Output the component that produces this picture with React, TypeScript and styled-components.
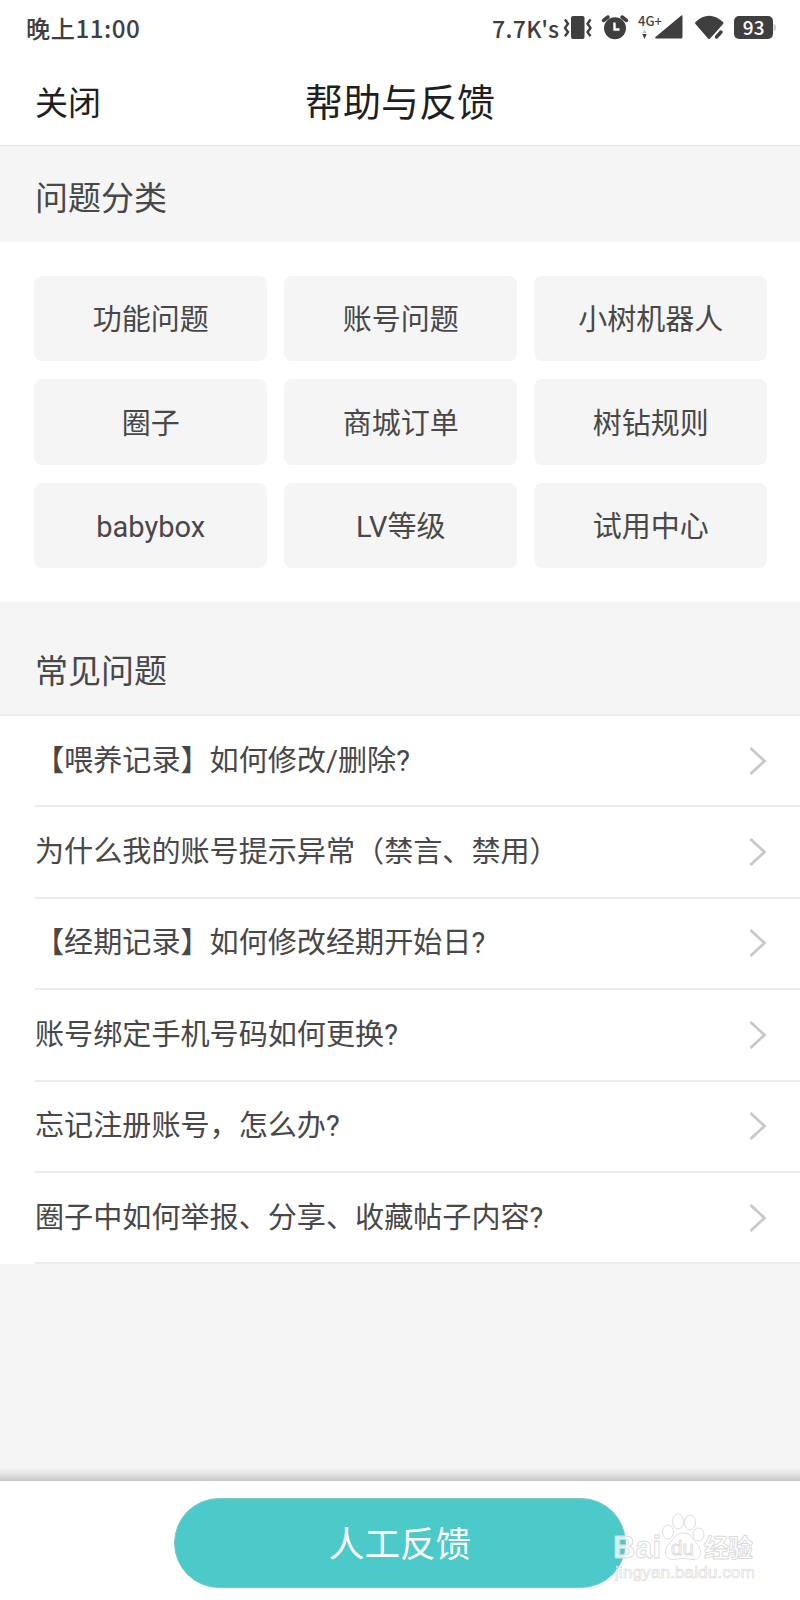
import React from 'react';
import styled, { createGlobalStyle } from 'styled-components';

const Global = createGlobalStyle`
  * { box-sizing: border-box; }
  body {
    margin: 0;
    background: #f5f5f5;
    font-family: Roboto, "Noto Sans CJK SC", sans-serif;
    color: #484848;
  }
`;

const Page = styled.div`
  position: relative;
  display: flex;
  flex-direction: column;
  width: 800px;
  height: 1600px;
  overflow: hidden;
  background: #f5f5f5;
`;

const StatusBar = styled.div`
  display: flex;
  justify-content: space-between;
  align-items: center;
  height: 56px;
  padding: 0 26px 0 26px;
  background: #fff;
  color: #3f3f3f;
`;

const Clock = styled.span`
  font: 500 24.2px/56px "Noto Sans CJK SC", sans-serif;
  letter-spacing: 0.5px;
  white-space: nowrap;
`;

const StatusRight = styled.div`
  display: flex;
  align-items: center;
`;

const Speed = styled.span`
  width: 70px;
  font: 500 23px/56px "Noto Sans CJK SC", sans-serif;
  letter-spacing: 0.4px;
  white-space: nowrap;
`;

const StatusIcons = styled.svg`
  display: block;
  width: 212px;
  height: 56px;
`;

const NavBar = styled.header`
  display: grid;
  grid-template-columns: 1fr auto 1fr;
  align-items: center;
  height: 90px;
  padding: 0 35px 0 35px;
  border-bottom: 1px solid #e4e4e4;
  background: #fff;
  color: #1f1f1f;
`;

const CloseButton = styled.button`
  justify-self: start;
  padding: 0;
  border: 0;
  background: none;
  color: inherit;
  font: 400 33px/48px "Noto Sans CJK SC", sans-serif;
`;

const Title = styled.h1`
  margin: 0;
  padding-bottom: 2px;
  font: 400 38px/56px "Noto Sans CJK SC", sans-serif;
`;

const SectionTitle = styled.h2<{ $height: number; $top: number }>`
  height: ${(p) => p.$height}px;
  margin: 0;
  padding: ${(p) => p.$top}px 35px 0;
  font-size: 33px;
  line-height: 48px;
  font-weight: 400;
`;

const CategoryGrid = styled.div`
  display: grid;
  grid-template-columns: repeat(3, 1fr);
  grid-auto-rows: 85.4px;
  gap: 18px 17.4px;
  height: 360px;
  padding: 34px 33px 0 34.4px;
  background: #fff;
`;

const Category = styled.button`
  display: flex;
  align-items: center;
  justify-content: center;
  padding: 3px 0 0;
  border: 0;
  border-radius: 8px;
  background: #f5f5f5;
  color: #484848;
  font-family: inherit;
  font-size: 29px;
  line-height: 42px;
`;

const QuestionList = styled.ul`
  margin: 0;
  padding: 0 0 0 35px;
  list-style: none;
  border-top: 2px solid #ebebeb;
  background: #fff;
`;

const Question = styled.li`
  display: flex;
  align-items: center;
  justify-content: space-between;
  height: 91.4px;
  padding-right: 33px;
  border-bottom: 2px solid #ededed;
  font-size: 29.1px;
  line-height: 42px;
  white-space: nowrap;
`;

const Chevron = styled.svg`
  width: 18px;
  height: 30px;
`;

const Footer = styled.footer`
  display: flex;
  justify-content: center;
  height: 119px;
  padding-top: 17px;
  background: #fff;
`;

const FooterShade = styled.div`
  height: 13px;
  margin-top: auto;
  background: linear-gradient(#f5f5f5, #e2e2e2 50%, #c8c8c8);
`;

const FeedbackButton = styled.button`
  width: 452px;
  height: 90px;
  padding: 0 0 3px;
  border: 1px solid #7cc9c7;
  border-radius: 45px;
  background: #4bcac9;
  color: #fff;
  font: 400 35.6px/52px "Noto Sans CJK SC", sans-serif;
`;

const Watermark = styled.svg`
  position: absolute;
  left: 605px;
  top: 1505px;
  width: 160px;
  height: 85px;
`;

const categories = [
  '功能问题', '账号问题', '小树机器人',
  '圈子', '商城订单', '树钻规则',
  'babybox', 'LV等级', '试用中心',
];

const questions = [
  '【喂养记录】如何修改/删除?',
  '为什么我的账号提示异常（禁言、禁用）',
  '【经期记录】如何修改经期开始日?',
  '账号绑定手机号码如何更换?',
  '忘记注册账号，怎么办?',
  '圈子中如何举报、分享、收藏帖子内容?',
];

export default function App() {
  return (
    <Page>
      <Global />
      <StatusBar>
        <Clock>晚上11:00</Clock>
        <StatusRight>
          <Speed>7.7K's</Speed>
          <StatusIcons viewBox="562 0 212 56" fill="#3f3f3f" overflow="visible">
            {/* vibrate */}
            <rect x="571" y="16" width="13.5" height="23" rx="2" />
            <path d="M565 19.500l3 4.200-3 4.200 3 4.200-3 4.200M590.500 19.500l-3 4.200 3 4.200-3 4.200 3 4.200" fill="none" stroke="#3f3f3f" strokeWidth="2.400" />
            {/* alarm */}
            <circle cx="615" cy="28.300" r="11" />
            <path d="M603.500 20.500l4.500-3.500M626.500 20.500l-4.500-3.500" stroke="#3f3f3f" strokeWidth="3.500" strokeLinecap="round" />
            <path d="M614.500 22.500v7h5" fill="none" stroke="#fff" strokeWidth="2.400" />
            {/* mobile signal */}
            <text x="638" y="26" fontFamily="Noto Sans CJK SC" fontSize="13" fontWeight="500">4G+</text>
            <path d="M656 38.500h25a1.500 1.500 0 0 0 1.500-1.500V16.500q0-2-1.500-.7L655.500 37q-1 1.500 .5 1.500z" />
            <path d="M642.300 34h4.400l-2.200 5z" />
            <path d="M642.500 33l2-3 2 3z" fill="#bbb" />
            {/* wifi */}
            <path d="M695.500 22Q709 9.500 723 22q1 1 0 2l-5.500 6.500-7.500 8q-1 1-2 0L695.500 24q-1-1 0-2z" />
            <path d="M713 37.500l9-10.500" stroke="#fff" strokeWidth="2" />
            <path d="M716.500 37l4.500-5" stroke="#3f3f3f" strokeWidth="3.400" strokeLinecap="round" />
            {/* battery */}
            <rect x="734" y="16" width="39" height="23" rx="5" />
            <path d="M773.500 24q2.500 0 2.500 3.500t-2.500 3.500z" fill="#ccc" />
            <text x="753.700" y="34.800" textAnchor="middle" fontFamily="Noto Sans CJK SC" fontSize="19" fontWeight="500" fill="#fff">93</text>
          </StatusIcons>
        </StatusRight>
      </StatusBar>

      <NavBar>
        <CloseButton>关闭</CloseButton>
        <Title>帮助与反馈</Title>
      </NavBar>

      <SectionTitle $height={96} $top={29}>问题分类</SectionTitle>
      <CategoryGrid>
        {categories.map((name) => <Category key={name}>{name}</Category>)}
      </CategoryGrid>

      <SectionTitle $height={112} $top={46}>常见问题</SectionTitle>
      <QuestionList>
        {questions.map((text) => (
          <Question key={text}>
            {text}
            <Chevron viewBox="0 0 18 30" fill="none" stroke="#c8c8c8" strokeWidth="2.800">
              <path d="M1.500 2l14 13-14 13" />
            </Chevron>
          </Question>
        ))}
      </QuestionList>

      <FooterShade />
      <Footer>
        <FeedbackButton>人工反馈</FeedbackButton>
      </Footer>

      <Watermark viewBox="605 1505 160 85" fill="#fff" fillOpacity="0.75" stroke="#dadada" strokeWidth="0.900" strokeLinejoin="round">
        <text x="613" y="1558" fontFamily="Liberation Sans" fontSize="32" fontWeight="700" textLength="48" lengthAdjust="spacingAndGlyphs">Bai</text>
        <ellipse cx="668" cy="1532" rx="5.500" ry="7" />
        <ellipse cx="678" cy="1521.500" rx="5.500" ry="7.500" />
        <ellipse cx="690" cy="1522.500" rx="5.500" ry="7.500" />
        <ellipse cx="698.500" cy="1534.500" rx="5.500" ry="6.500" />
        <path d="M683 1533c-8 0-10 7-14 11-7 7-3 16 4 15.500 5-.5 7-1 10-1s5 .5 10 1c7 .5 11-8 4-15.500-4-4-6-11-14-11z" />
        <text x="671" y="1555" fontFamily="Liberation Sans" fontSize="21" fontWeight="400" textLength="23" lengthAdjust="spacingAndGlyphs">du</text>
        <text x="704" y="1557" fontFamily="Noto Sans CJK SC" fontSize="25" fontWeight="700" textLength="49">经验</text>
        <text x="615" y="1578" fontFamily="Liberation Sans" fontSize="16.500" textLength="140" strokeWidth="0.600" lengthAdjust="spacingAndGlyphs">jingyan.baidu.com</text>
      </Watermark>
    </Page>
  );
}
